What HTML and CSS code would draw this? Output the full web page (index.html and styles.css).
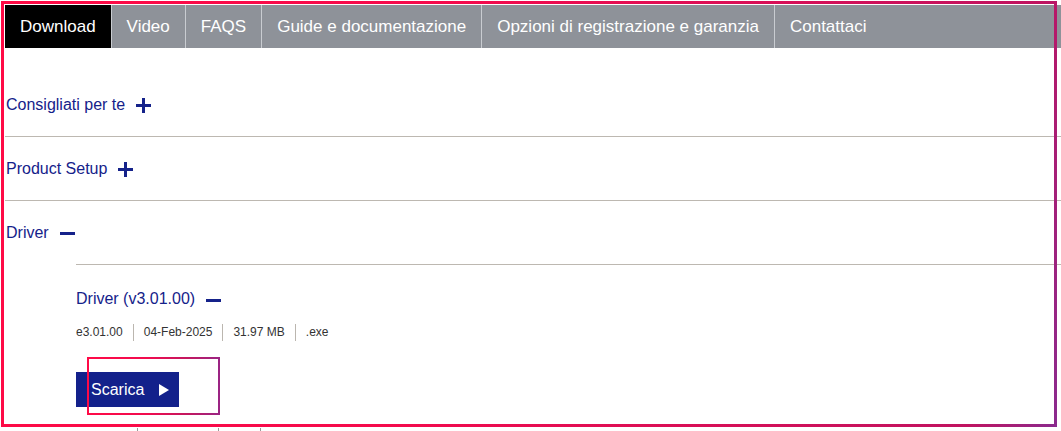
FILE: index.html
```html
<!DOCTYPE html>
<html lang="it">
<head>
<meta charset="utf-8">
<title>Download</title>
<link rel="stylesheet" href="styles.css">
</head>
<body>
<div class="page">
  <nav class="tabs">
    <a class="tab active">Download</a>
    <a class="tab">Video</a>
    <a class="tab">FAQS</a>
    <a class="tab">Guide e documentazione</a>
    <a class="tab">Opzioni di registrazione e garanzia</a>
    <a class="tab">Contattaci</a>
  </nav>
  <section class="acc">
    <div class="acc-item">
      <div class="acc-head">Consigliati per te
        <svg class="ico" width="15" height="15" viewBox="0 0 15 15"><rect x="0" y="6" width="15" height="3"/><rect x="6" y="0" width="3" height="15"/></svg>
      </div>
    </div>
    <div class="acc-item">
      <div class="acc-head">Product Setup
        <svg class="ico" width="15" height="15" viewBox="0 0 15 15"><rect x="0" y="6" width="15" height="3"/><rect x="6" y="0" width="3" height="15"/></svg>
      </div>
    </div>
    <div class="acc-item open">
      <div class="acc-head">Driver
        <svg class="ico" width="15" height="15" viewBox="0 0 15 15"><rect x="0" y="6" width="15" height="3"/></svg>
      </div>
      <div class="acc-body">
        <div class="sub">
          <div class="sub-head">Driver (v3.01.00)
            <svg class="ico" width="15" height="15" viewBox="0 0 15 15"><rect x="0" y="6" width="15" height="3"/></svg>
          </div>
          <div class="meta">
            <span>e3.01.00</span><span>04-Feb-2025</span><span>31.97 MB</span><span>.exe</span>
          </div>
          <a class="btn">Scarica
            <svg class="tri" width="10" height="12" viewBox="0 0 10 12"><polygon points="0,0 10,6 0,12"/></svg>
          </a>
          <div class="next-row"><span class="c1"></span><span class="c2"></span><span class="c3"></span></div>
        </div>
      </div>
    </div>
  </section>
</div>
<div class="hl hl-page"></div>
<div class="hl hl-btn"></div>
</body>
</html>
```
FILE: styles.css
```css
html, body {
  margin: 0;
  padding: 0;
  background: #fff;
  overflow: hidden;
}
body {
  width: 1061px;
  height: 431px;
  position: relative;
  font-family: "Liberation Sans", Arial, sans-serif;
}
.page {
  padding: 5px 0 0 5px;
}
.tabs {
  display: flex;
  height: 43px;
  background: #8e9299;
}
.tab {
  display: block;
  padding: 0 15px;
  line-height: 43px;
  font-size: 17px;
  color: #fff;
  border-right: 1px solid #c9ccd1;
  white-space: nowrap;
}
.tab:last-child {
  border-right: none;
}
.tab.active {
  background: #000;
}
.acc {
  padding-top: 25px;
  color: #15228a;
  font-size: 16px;
}
.acc-item {
  border-bottom: 1px solid #bdb8b1;
}
.acc-item.open {
  border-bottom: none;
}
.acc-head {
  height: 63px;
  display: flex;
  align-items: center;
  padding-left: 1px;
}
.ico {
  display: block;
  margin-left: 11px;
  margin-top: 2px;
  fill: #15228a;
}
.acc-body {
  padding-left: 71px;
}
.sub {
  border-top: 1px solid #bdb8b1;
}
.sub-head {
  margin-top: 24px;
  height: 20px;
  display: flex;
  align-items: center;
}
.meta {
  margin-top: 15px;
  display: flex;
  font-size: 12px;
  line-height: 17px;
  color: #333;
}
.meta span {
  padding: 0 10px;
}
.meta span:first-child {
  padding-left: 0;
}
.meta span + span {
  border-left: 1px solid #bbb6af;
}
.btn {
  margin-top: 31px;
  display: inline-flex;
  align-items: center;
  height: 35px;
  padding: 0 10px 0 15px;
  background: #13218b;
  color: #fff;
  font-size: 16px;
}
.tri {
  display: block;
  margin-left: 15px;
  fill: #fff;
}
.next-row {
  margin-top: 21px;
  display: flex;
  padding-left: 61px;
  height: 20px;
}
.next-row span {
  border-left: 1px solid #9a9a9a;
}
.c1 { width: 80px; }
.c2 { width: 41px; }
.c3 { width: 40px; }
.hl {
  position: absolute;
  box-sizing: border-box;
  -webkit-mask: linear-gradient(#000 0 0) content-box, linear-gradient(#000 0 0);
  -webkit-mask-composite: xor;
  mask-composite: exclude;
}
.hl-page {
  left: 1px;
  top: 1px;
  width: 1056px;
  height: 426px;
  padding: 3px;
  background: linear-gradient(100deg, #ff0a45 0%, #f50a4c 40%, #c01360 92%, #8a2a8e 100%);
}
.hl-btn {
  left: 87px;
  top: 357px;
  width: 133px;
  height: 58px;
  padding: 2px;
  background: linear-gradient(to right, #ff0a47 0%, #f20b4e 45%, #c4175f 75%, #9a2484 100%);
}
```
